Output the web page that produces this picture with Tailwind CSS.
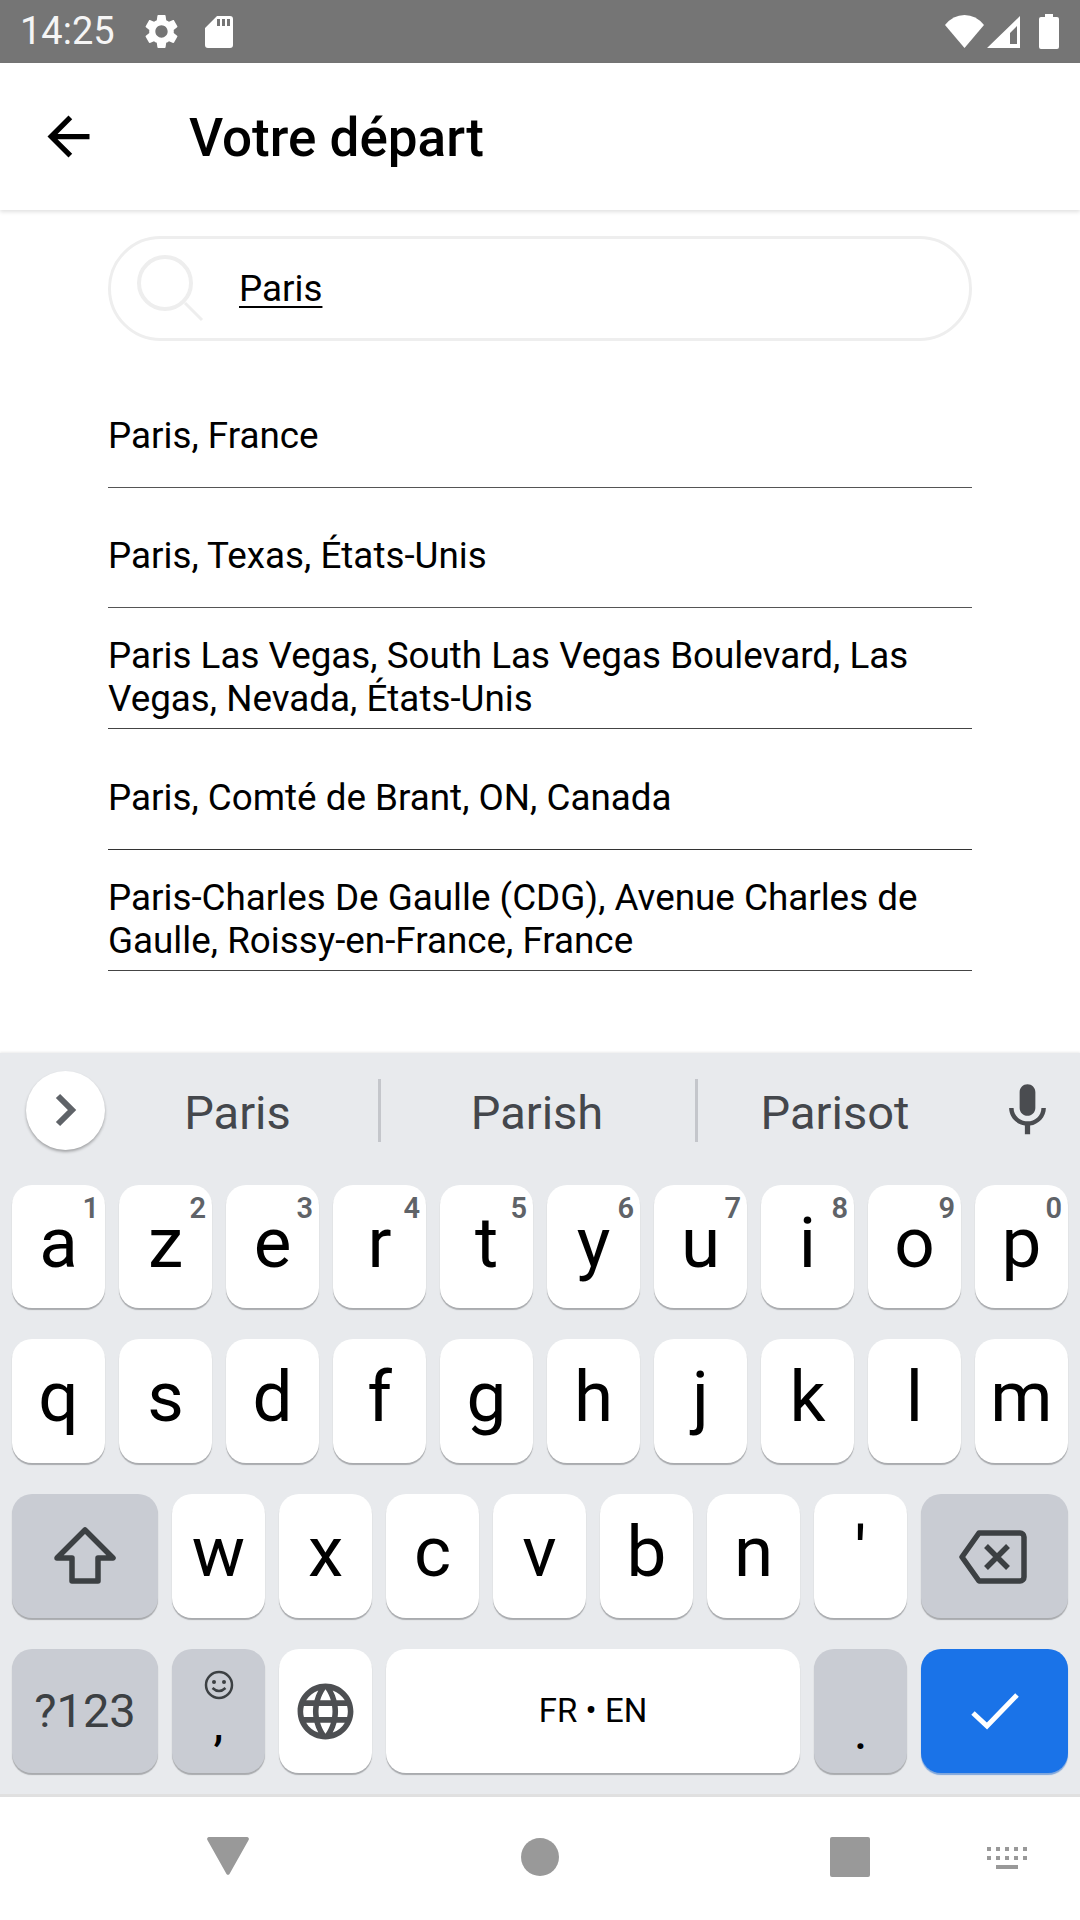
<!DOCTYPE html>
<html lang="fr">
  <head>
    <meta charset="UTF-8" />
    <meta name="viewport" content="width=device-width, initial-scale=1.0" />
    <title>Votre départ</title>
    <script src="https://cdn.jsdelivr.net/npm/@tailwindcss/browser@4"></script>
  </head>

  <body class="font-[family-name:Roboto,sans-serif] bg-white">
    <div class="w-[1080px] h-[1920px] flex flex-col overflow-hidden">
      <!-- status bar -->
      <div class="h-[63px] shrink-0 bg-[#757575] flex items-center pl-[20px] text-white">
        <span class="text-[38px] leading-[63px] w-[121px] text-[#f5f5f5]">14:25</span>
        <svg class="w-[41px] h-[41px] fill-white" viewBox="0 0 24 24"><path d="M19.14 12.94c.04-.3.06-.61.06-.94 0-.32-.02-.64-.07-.94l2.03-1.58c.18-.14.23-.41.12-.61l-1.92-3.32c-.12-.22-.37-.29-.59-.22l-2.39.96c-.5-.38-1.03-.7-1.62-.94l-.36-2.54c-.04-.24-.24-.41-.48-.41h-3.84c-.24 0-.43.17-.47.41l-.36 2.54c-.59.24-1.13.57-1.62.94l-2.39-.96c-.22-.08-.47 0-.59.22L2.74 8.87c-.12.21-.08.47.12.61l2.03 1.58c-.05.3-.09.63-.09.94s.02.64.07.94l-2.03 1.58c-.18.14-.23.41-.12.61l1.92 3.32c.12.22.37.29.59.22l2.39-.96c.5.38 1.03.7 1.62.94l.36 2.54c.05.24.24.41.48.41h3.84c.24 0 .44-.17.47-.41l.36-2.54c.59-.24 1.13-.56 1.62-.94l2.39.96c.22.08.47 0 .59-.22l1.92-3.32c.12-.22.07-.47-.12-.61l-2.01-1.58zM12 15.6c-1.98 0-3.6-1.62-3.6-3.6s1.62-3.6 3.6-3.6 3.6 1.62 3.6 3.6-1.62 3.6-3.6 3.6z"/></svg>
        <svg class="ml-[23px] w-[28px] h-[32px]" viewBox="0 0 28 32"><path fill="#fff" fill-rule="evenodd" d="M12 0h13a3 3 0 0 1 3 3v26a3 3 0 0 1-3 3H3a3 3 0 0 1-3-3V12zM12 3v7h3V3zM17 3v7h3V3zM22 3v7h3V3z"/></svg>
        <div class="ml-auto flex items-center">
          <svg class="w-[39px] h-[33px]" viewBox="0 0 39 33"><path fill="#fff" d="M19.5 33 0 10Q8 0 19.5 0T39 10z"/></svg>
          <svg class="ml-[3px] w-[33px] h-[32px]" viewBox="0 0 33 32"><path fill="#fff" fill-rule="evenodd" d="M33 0v32H0zM30 10l-7 7v11h7z"/></svg>
          <svg class="ml-[19px] mr-[21px] w-[20px] h-[35px]" viewBox="0 0 20 35"><path fill="#fff" d="M6 0h8v3h4a2 2 0 0 1 2 2v28a2 2 0 0 1-2 2H2a2 2 0 0 1-2-2V5a2 2 0 0 1 2-2h4z"/></svg>
        </div>
      </div>

      <!-- header -->
      <div class="h-[147px] shrink-0 flex items-center bg-white shadow-[0_2px_4px_rgba(0,0,0,0.12)] relative">
        <svg class="ml-[37px] w-[63px] h-[63px] fill-black" viewBox="0 0 24 24"><path d="M20 11H7.83l5.59-5.59L12 4l-8 8 8 8 1.41-1.41L7.83 13H20v-2z"/></svg>
        <h1 class="ml-[89px] mt-[4px] text-[53px] font-medium text-black leading-none">Votre départ</h1>
      </div>

      <!-- search and results -->
      <div class="flex-1 px-[108px] pt-[26px]">
        <div class="h-[105px] border-[3px] border-[#eeeeee] rounded-full flex items-center">
          <svg class="ml-[24px] w-[72px] h-[72px] fill-none stroke-[#eeeeee]" viewBox="0 0 72 72">
            <circle cx="30" cy="30" r="26" stroke-width="4" />
            <path d="M50 50 67 67" stroke-width="3" />
          </svg>
          <span class="ml-[32px] text-[36.800px] leading-[43px] text-black underline underline-offset-[5px] decoration-2">Paris</span>
        </div>

        <div class="mt-[26px]">
          <div class="h-[121px] pt-[16px] border-b border-[#555] flex items-center text-[36.800px] leading-[43px] text-black">Paris, France</div>
          <div class="h-[120px] pt-[16px] border-b border-[#555] flex items-center text-[36.800px] leading-[43px] text-black">Paris, Texas, États-Unis</div>
          <div class="h-[121px] pt-[18px] border-b border-[#444] flex items-center text-[36.800px] leading-[43px] text-black">Paris Las Vegas, South Las Vegas Boulevard, Las Vegas, Nevada, États-Unis</div>
          <div class="h-[121px] pt-[16px] border-b border-[#333] flex items-center text-[36.800px] leading-[43px] text-black">Paris, Comté de Brant, ON, Canada</div>
          <div class="h-[121px] pt-[18px] border-b border-[#444] flex items-center text-[36.800px] leading-[43px] text-black">Paris-Charles De Gaulle (CDG), Avenue Charles de Gaulle, Roissy-en-France, France</div>
        </div>
      </div>

      <!-- keyboard -->
      <div class="h-[744px] shrink-0 bg-[#e8eaed] shadow-[0_-1px_2px_rgba(0,0,0,0.08)] border-b-[3px] border-[#e0e0e0] relative">
        <!-- suggestion strip -->
        <div class="h-[132px] pb-[18px] flex items-center text-[47px] text-[#44474c]">
          <div class="ml-[26px] w-[79px] h-[79px] rounded-full bg-white shadow-[0_2px_3px_rgba(0,0,0,0.3)] flex items-center justify-center">
            <svg class="w-[24px] h-[36px] fill-none stroke-[#5f6368]" viewBox="0 0 24 36"><path d="M4 4 18 18 4 32" stroke-width="6" /></svg>
          </div>
          <div class="w-[273px] pt-[6px] pr-[8px] text-center">Paris</div>
          <div class="w-[3px] h-[63px] bg-[#c4c6cb]"></div>
          <div class="w-[314px] pt-[6px] pr-[2px] text-center">Parish</div>
          <div class="w-[3px] h-[63px] bg-[#c4c6cb]"></div>
          <div class="w-[280px] pt-[6px] pr-[6px] text-center">Parisot</div>
          <svg class="ml-[18px] w-[63px] h-[63px] fill-[#4a4c50]" viewBox="0 0 24 24"><path d="M12 14c1.66 0 2.99-1.34 2.99-3L15 5c0-1.66-1.34-3-3-3S9 3.34 9 5v6c0 1.66 1.34 3 3 3zm5.3-3c0 3-2.54 5.1-5.3 5.1S6.7 14 6.7 11H5c0 3.41 2.72 6.23 6 6.72V21h2v-3.28c3.28-.48 6-3.3 6-6.72h-1.7z"/></svg>
        </div>

        <div class="pl-[12px] flex flex-col gap-[31px]">
          <!-- row 1 -->
          <div class="flex gap-[14px] h-[123px] text-[71px] text-black">
            <div class="w-[93px] pb-[7px] relative rounded-[20px] bg-white shadow-[0_2px_1px_#a9abae] flex items-center justify-center">a<span class="absolute right-[6px] top-[2px] text-[29px] font-semibold text-[#5f6368]">1</span></div>
            <div class="w-[93px] pb-[7px] relative rounded-[20px] bg-white shadow-[0_2px_1px_#a9abae] flex items-center justify-center">z<span class="absolute right-[6px] top-[2px] text-[29px] font-semibold text-[#5f6368]">2</span></div>
            <div class="w-[93px] pb-[7px] relative rounded-[20px] bg-white shadow-[0_2px_1px_#a9abae] flex items-center justify-center">e<span class="absolute right-[6px] top-[2px] text-[29px] font-semibold text-[#5f6368]">3</span></div>
            <div class="w-[93px] pb-[7px] relative rounded-[20px] bg-white shadow-[0_2px_1px_#a9abae] flex items-center justify-center">r<span class="absolute right-[6px] top-[2px] text-[29px] font-semibold text-[#5f6368]">4</span></div>
            <div class="w-[93px] pb-[7px] relative rounded-[20px] bg-white shadow-[0_2px_1px_#a9abae] flex items-center justify-center">t<span class="absolute right-[6px] top-[2px] text-[29px] font-semibold text-[#5f6368]">5</span></div>
            <div class="w-[93px] pb-[7px] relative rounded-[20px] bg-white shadow-[0_2px_1px_#a9abae] flex items-center justify-center">y<span class="absolute right-[6px] top-[2px] text-[29px] font-semibold text-[#5f6368]">6</span></div>
            <div class="w-[93px] pb-[7px] relative rounded-[20px] bg-white shadow-[0_2px_1px_#a9abae] flex items-center justify-center">u<span class="absolute right-[6px] top-[2px] text-[29px] font-semibold text-[#5f6368]">7</span></div>
            <div class="w-[93px] pb-[7px] relative rounded-[20px] bg-white shadow-[0_2px_1px_#a9abae] flex items-center justify-center">i<span class="absolute right-[6px] top-[2px] text-[29px] font-semibold text-[#5f6368]">8</span></div>
            <div class="w-[93px] pb-[7px] relative rounded-[20px] bg-white shadow-[0_2px_1px_#a9abae] flex items-center justify-center">o<span class="absolute right-[6px] top-[2px] text-[29px] font-semibold text-[#5f6368]">9</span></div>
            <div class="w-[93px] pb-[7px] relative rounded-[20px] bg-white shadow-[0_2px_1px_#a9abae] flex items-center justify-center">p<span class="absolute right-[6px] top-[2px] text-[29px] font-semibold text-[#5f6368]">0</span></div>
          </div>
          <!-- row 2 -->
          <div class="flex gap-[14px] h-[124px] text-[71px] text-black">
            <div class="w-[93px] pb-[7px] rounded-[20px] bg-white shadow-[0_2px_1px_#a9abae] flex items-center justify-center">q</div>
            <div class="w-[93px] pb-[7px] rounded-[20px] bg-white shadow-[0_2px_1px_#a9abae] flex items-center justify-center">s</div>
            <div class="w-[93px] pb-[7px] rounded-[20px] bg-white shadow-[0_2px_1px_#a9abae] flex items-center justify-center">d</div>
            <div class="w-[93px] pb-[7px] rounded-[20px] bg-white shadow-[0_2px_1px_#a9abae] flex items-center justify-center">f</div>
            <div class="w-[93px] pb-[7px] rounded-[20px] bg-white shadow-[0_2px_1px_#a9abae] flex items-center justify-center">g</div>
            <div class="w-[93px] pb-[7px] rounded-[20px] bg-white shadow-[0_2px_1px_#a9abae] flex items-center justify-center">h</div>
            <div class="w-[93px] pb-[7px] rounded-[20px] bg-white shadow-[0_2px_1px_#a9abae] flex items-center justify-center">j</div>
            <div class="w-[93px] pb-[7px] rounded-[20px] bg-white shadow-[0_2px_1px_#a9abae] flex items-center justify-center">k</div>
            <div class="w-[93px] pb-[7px] rounded-[20px] bg-white shadow-[0_2px_1px_#a9abae] flex items-center justify-center">l</div>
            <div class="w-[93px] pb-[7px] rounded-[20px] bg-white shadow-[0_2px_1px_#a9abae] flex items-center justify-center">m</div>
          </div>
          <!-- row 3 -->
          <div class="flex gap-[14px] h-[124px] text-[71px] text-black">
            <div class="w-[146px] rounded-[20px] bg-[#c9ccd3] shadow-[0_2px_1px_#a9abae] flex items-center justify-center">
              <svg class="w-[62px] h-[58px] fill-none stroke-[#3c4043]" viewBox="0 0 62 58"><path d="M31 3 59 31H44V54H18V31H3z" stroke-width="5.500" stroke-linejoin="round" /></svg>
            </div>
            <div class="w-[93px] pb-[7px] rounded-[20px] bg-white shadow-[0_2px_1px_#a9abae] flex items-center justify-center">w</div>
            <div class="w-[93px] pb-[7px] rounded-[20px] bg-white shadow-[0_2px_1px_#a9abae] flex items-center justify-center">x</div>
            <div class="w-[93px] pb-[7px] rounded-[20px] bg-white shadow-[0_2px_1px_#a9abae] flex items-center justify-center">c</div>
            <div class="w-[93px] pb-[7px] rounded-[20px] bg-white shadow-[0_2px_1px_#a9abae] flex items-center justify-center">v</div>
            <div class="w-[93px] pb-[7px] rounded-[20px] bg-white shadow-[0_2px_1px_#a9abae] flex items-center justify-center">b</div>
            <div class="w-[93px] pb-[7px] rounded-[20px] bg-white shadow-[0_2px_1px_#a9abae] flex items-center justify-center">n</div>
            <div class="w-[93px] pb-[7px] rounded-[20px] bg-white shadow-[0_2px_1px_#a9abae] flex items-center justify-center">'</div>
            <div class="w-[147px] pt-[2px] pr-[3px] rounded-[20px] bg-[#c9ccd3] shadow-[0_2px_1px_#a9abae] flex items-center justify-center">
              <svg class="w-[68px] h-[54px] fill-none stroke-[#3c4043]" viewBox="0 0 68 54"><path d="M20 3H61a4 4 0 0 1 4 4V47a4 4 0 0 1-4 4H20L3 27z" stroke-width="5.500" stroke-linejoin="round" /><path d="M27 16 49 38M49 16 27 38" stroke-width="5.500" /></svg>
            </div>
          </div>
          <!-- row 4 -->
          <div class="flex gap-[14px] h-[124px] text-black">
            <div class="w-[146px] rounded-[20px] bg-[#c9ccd3] shadow-[0_2px_1px_#a9abae] flex items-center justify-center text-[47px] font-[450] text-[#3c4043]">?123</div>
            <div class="w-[93px] rounded-[20px] bg-[#c9ccd3] shadow-[0_2px_1px_#a9abae] flex flex-col items-center">
              <svg class="mt-[21px] w-[30px] h-[30px] fill-none stroke-[#3c4043]" viewBox="0 0 30 30"><circle cx="15" cy="15" r="13" stroke-width="2.500" /><circle cx="10" cy="12" r="2" fill="#3c4043" stroke="none" /><circle cx="20" cy="12" r="2" fill="#3c4043" stroke="none" /><path d="M8.500 18Q15 24 21.500 18" stroke-width="2.500" /></svg>
              <span class="text-[44px] leading-[50px] font-medium">,</span>
            </div>
            <div class="w-[93px] rounded-[20px] bg-white shadow-[0_2px_1px_#a9abae] flex items-center justify-center">
              <svg class="w-[67px] h-[67px] fill-[#4d4f52]" viewBox="0 0 24 24"><path d="M11.990 2C6.470 2 2 6.480 2 12s4.470 10 9.990 10C17.520 22 22 17.520 22 12S17.520 2 11.990 2zm6.930 6h-2.950c-.32-1.250-.78-2.450-1.380-3.560 1.840.63 3.370 1.910 4.330 3.560zM12 4.040c.83 1.200 1.480 2.530 1.910 3.960h-3.820c.43-1.430 1.080-2.760 1.910-3.960zM4.260 14C4.100 13.360 4 12.690 4 12s.1-1.360.26-2h3.380c-.08.66-.14 1.320-.14 2 0 .68.06 1.340.14 2H4.260zm.82 2h2.950c.32 1.250.78 2.450 1.380 3.560-1.840-.63-3.370-1.900-4.330-3.560zm2.950-8H5.080c.96-1.660 2.490-2.930 4.330-3.560C8.810 5.550 8.350 6.750 8.030 8zM12 19.960c-.83-1.200-1.480-2.530-1.910-3.960h3.820c-.43 1.430-1.080 2.760-1.910 3.960zM14.340 14H9.660c-.09-.66-.16-1.320-.16-2 0-.68.07-1.350.16-2h4.680c.09.65.16 1.320.16 2 0 .68-.07 1.340-.16 2zm.25 5.560c.6-1.110 1.060-2.310 1.380-3.560h2.950c-.96 1.650-2.490 2.930-4.330 3.560zM16.360 14c.08-.66.14-1.320.14-2 0-.68-.06-1.340-.14-2h3.380c.16.64.26 1.310.26 2s-.1 1.360-.26 2h-3.380z"/></svg>
            </div>
            <div class="w-[414px] rounded-[20px] bg-white shadow-[0_2px_1px_#a9abae] flex items-center justify-center text-[33px]">FR • EN</div>
            <div class="w-[93px] rounded-[20px] bg-[#c9ccd3] shadow-[0_2px_1px_#a9abae] flex flex-col items-center justify-end pb-[14px] text-[44px] leading-[50px] font-medium">.</div>
            <div class="w-[147px] rounded-[20px] bg-[#1a73e8] shadow-[0_2px_1px_#7ea6dc] flex items-center justify-center">
              <svg class="w-[48px] h-[38px] fill-none stroke-white" viewBox="0 0 48 38"><path d="M2 21 16 34 46 3" stroke-width="5" /></svg>
            </div>
          </div>
        </div>
      </div>

      <!-- nav bar -->
      <div class="h-[123px] shrink-0 pb-[4px] bg-white relative flex items-center">
        <svg class="ml-[207px] mt-[-2px] w-[42px] h-[38px] fill-[#999999]" viewBox="0 0 42 38"><path d="M2 0H40a2 2 0 0 1 1.600 3L22.500 37a2 2 0 0 1-3 0L.4 3A2 2 0 0 1 2 0z"/></svg>
        <div class="ml-[272px] w-[38px] h-[38px] rounded-full bg-[#999999]"></div>
        <div class="ml-[271px] w-[40px] h-[40px] rounded-[2px] bg-[#999999]"></div>
        <svg class="ml-[117px] mt-[4px] w-[41px] h-[23px] fill-[#999999]" viewBox="0 0 41 23">
          <path d="M0 0h4v4H0zM9 0h4v4H9zM18 0h4v4h-4zM27 0h4v4h-4zM36 0h4v4h-4zM0 9h4v4H0zM9 9h4v4H9zM18 9h4v4h-4zM27 9h4v4h-4zM36 9h4v4h-4zM9 18h22v4H9z"/>
        </svg>
      </div>
    </div>
  </body>
</html>
